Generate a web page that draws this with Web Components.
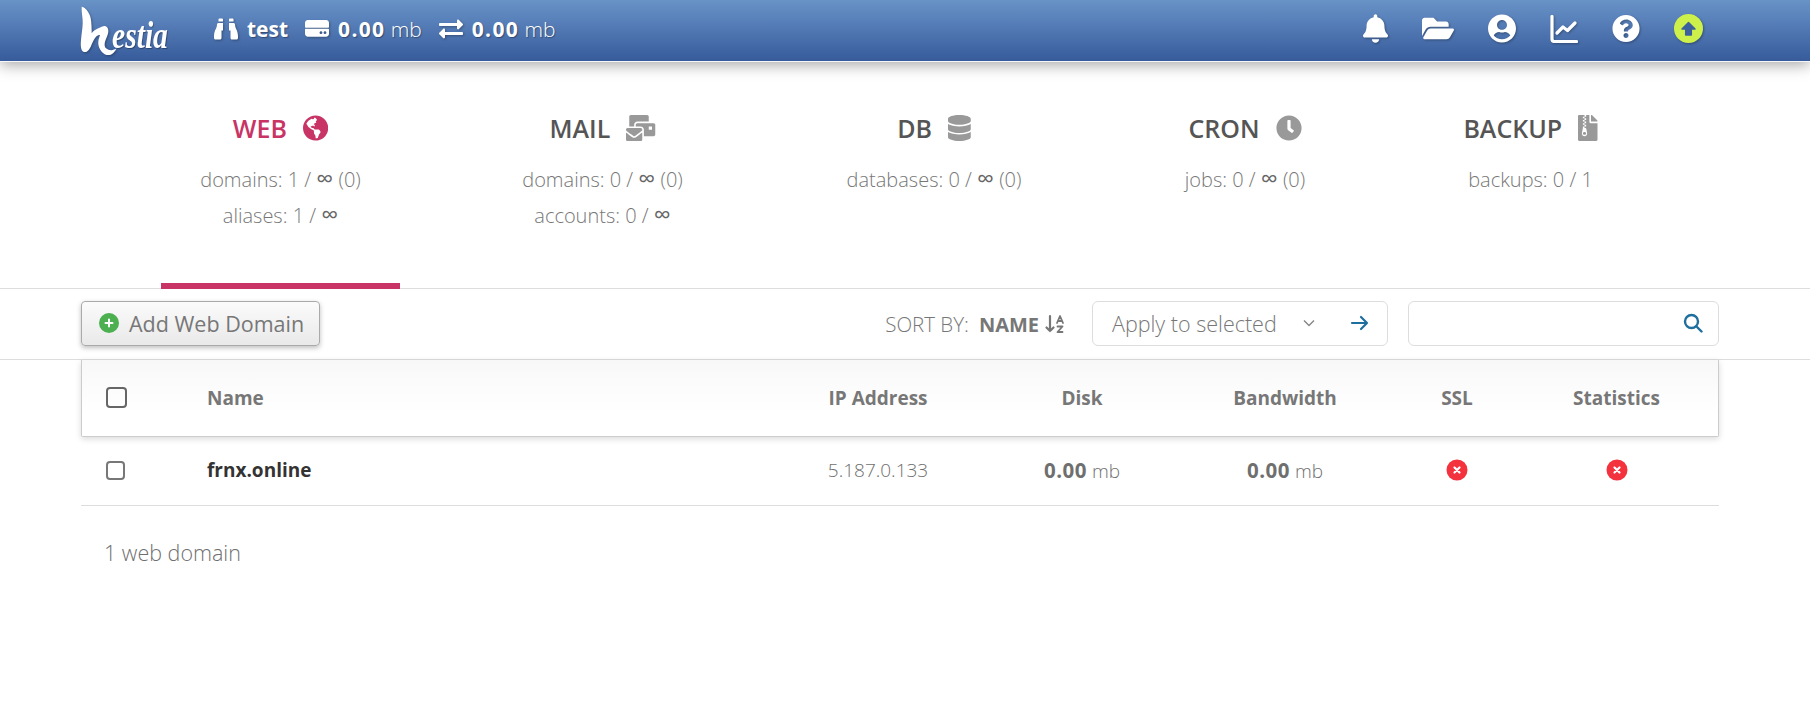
<!DOCTYPE html>
<html lang="en">
<head>
<meta charset="utf-8">
<title>Hestia</title>
<style>
html,body{margin:0;padding:0;background:#fff;}
body{font-family:"Open Sans","Noto Sans",sans-serif;color:#777;width:1810px;height:714px;overflow:hidden;}
hst-tab b{font-size:1.2em;line-height:0;color:#666;}
</style>
</head>
<body>
<hst-header></hst-header>
<hst-tabs>
  <hst-tab label="WEB" icon="globe" active>
    <div>domains: 1 / <b>∞</b> (0)</div>
    <div>aliases: 1 / <b>∞</b></div>
  </hst-tab>
  <hst-tab label="MAIL" icon="mail">
    <div>domains: 0 / <b>∞</b> (0)</div>
    <div>accounts: 0 / <b>∞</b></div>
  </hst-tab>
  <hst-tab label="DB" icon="database">
    <div>databases: 0 / <b>∞</b> (0)</div>
  </hst-tab>
  <hst-tab label="CRON" icon="clock">
    <div>jobs: 0 / <b>∞</b> (0)</div>
  </hst-tab>
  <hst-tab label="BACKUP" icon="archive">
    <div>backups: 0 / 1</div>
  </hst-tab>
</hst-tabs>
<hst-toolbar></hst-toolbar>
<hst-table></hst-table>
<script>
const P={
bell:['0 0 448 512','M224 512c35.32 0 63.97-28.65 63.97-64H160.03c0 35.35 28.65 64 63.97 64zm215.39-149.71c-19.32-20.76-55.47-51.99-55.47-154.29 0-77.7-54.48-139.9-127.94-155.16V32c0-17.67-14.32-32-31.98-32s-31.98 14.33-31.98 32v20.84C118.56 68.1 64.08 130.3 64.08 208c0 102.3-36.15 133.53-55.47 154.29-6 6.45-8.66 14.16-8.61 21.71.11 16.4 12.98 32 32.1 32h383.8c19.12 0 32-15.6 32.1-32 .05-7.55-2.61-15.27-8.61-21.71z'],
folder:['0 0 576 512','M572.694 292.093L500.27 416.248A63.997 63.997 0 0 1 444.989 448H45.025c-18.523 0-30.064-20.093-20.731-36.093l72.424-124.155A64 64 0 0 1 152 256h399.964c18.523 0 30.064 20.093 20.73 36.093zM152 224h328v-48c0-26.51-21.49-48-48-48H272l-64-64H48C21.49 64 0 85.49 0 112v278.046l69.077-118.418C86.214 242.25 117.989 224 152 224z'],
user:['0 0 496 512','M248 8C111 8 0 119 0 256s111 248 248 248 248-111 248-248S385 8 248 8zm0 96c48.6 0 88 39.4 88 88s-39.4 88-88 88-88-39.4-88-88 39.4-88 88-88zm0 344c-58.7 0-111.3-26.6-146.5-68.2 18.8-35.4 55.6-59.8 98.5-59.8 2.4 0 4.8.4 7.1 1.1 13 4.2 26.6 6.9 40.9 6.9 14.3 0 28-2.7 40.9-6.9 2.3-.7 4.7-1.1 7.1-1.1 42.9 0 79.7 24.4 98.5 59.8C359.3 421.4 306.7 448 248 448z'],
question:['0 0 512 512','M504 256c0 136.997-111.043 248-248 248S8 392.997 8 256C8 119.083 119.043 8 256 8s248 111.083 248 248zM262.655 90c-54.497 0-89.255 22.957-116.549 63.758-3.536 5.286-2.353 12.415 2.715 16.258l34.699 26.31c5.205 3.947 12.621 3.008 16.665-2.122 17.864-22.658 30.113-35.797 57.303-35.797 20.429 0 45.698 13.148 45.698 32.958 0 14.976-12.363 22.667-32.534 33.976C247.128 238.528 216 254.941 216 296v4c0 6.627 5.373 12 12 12h56c6.627 0 12-5.373 12-12v-1.333c0-28.462 83.186-29.647 83.186-106.667 0-58.002-60.165-102-116.531-102zM256 338c-25.365 0-46 20.635-46 46 0 25.364 20.635 46 46 46s46-20.636 46-46c0-25.365-20.635-46-46-46z'],
globe:['0 0 496 512','M248 8C111.03 8 0 119.03 0 256s111.03 248 248 248 248-111.03 248-248S384.97 8 248 8zm82.29 357.6c-3.9 3.88-7.99 7.95-11.31 11.28-2.99 3-5.1 6.7-6.17 10.71-1.51 5.66-2.73 11.38-4.77 16.87l-17.39 46.85c-13.76 3-28 4.69-42.65 4.69v-27.38c1.69-12.62-7.64-36.26-22.63-51.25-6-6-9.37-14.14-9.37-22.63v-32.01c0-11.64-6.27-22.34-16.46-27.97-14.37-7.95-34.81-19.06-48.81-26.11-11.48-5.78-22.1-13.14-31.65-21.75l-.8-.72a114.792 114.792 0 0 1-18.06-20.74c-9.38-13.77-24.66-36.42-34.59-51.14 20.47-45.5 57.36-82.04 103.2-101.89l24.01 12.01C203.48 89.74 216 82.01 216 70.11v-11.3c7.99-1.29 16.12-2.11 24.45-2.44l28.3 28.3c6.25 6.25 6.25 16.38 0 22.63L264 112l-10.34 10.34c-3.12 3.12-3.12 8.19 0 11.31l4.69 4.69c3.12 3.12 3.12 8.19 0 11.31l-8 8a8.008 8.008 0 0 1-5.66 2.34h-8.99c-2.08 0-4.08.81-5.58 2.27l-9.92 9.65a8.008 8.008 0 0 0-1.58 9.31l15.59 31.19c2.66 5.32-1.21 11.58-7.15 11.58h-5.64c-1.93 0-3.79-.7-5.24-1.96l-9.28-8.06a16.017 16.017 0 0 0-15.55-3.1l-31.17 10.39a11.95 11.95 0 0 0-8.17 11.34c0 4.53 2.56 8.66 6.61 10.69l11.08 5.54c9.41 4.71 19.79 7.16 30.31 7.16s22.59 27.29 32 32h66.75c8.49 0 16.62 3.37 22.63 9.37l13.69 13.69a30.503 30.503 0 0 1 8.93 21.57 46.536 46.536 0 0 1-13.72 32.98z'],
mail:['0 0 576 512','M160 448c-25.6 0-51.2-22.4-64-32-64-44.8-83.2-60.8-96-70.4V480c0 17.67 14.33 32 32 32h256c17.67 0 32-14.33 32-32V345.6c-12.8 9.6-32 25.6-96 70.4-12.8 9.6-38.4 32-64 32zm128-192H32c-17.67 0-32 14.33-32 32v16c25.6 19.2 22.4 19.2 115.2 86.4 9.6 6.4 28.8 25.6 44.8 25.6s35.2-19.2 44.8-22.4c92.8-67.2 89.6-67.2 115.2-86.4V288c0-17.67-14.33-32-32-32zm256-96H224c-17.67 0-32 14.33-32 32v32h96c33.21 0 60.59 25.42 63.71 57.82l.29-.22V416h192c17.67 0 32-14.33 32-32V192c0-17.67-14.33-32-32-32zm-32 128h-64v-64h64v64zm-352-96c0-35.29 28.71-64 64-64h224V32c0-17.67-14.33-32-32-32H96C78.33 0 64 14.33 64 32v192h96v-32z'],
database:['0 0 448 512','M448 73.143v45.714C448 159.143 347.667 192 224 192S0 159.143 0 118.857V73.143C0 32.857 100.333 0 224 0s224 32.857 224 73.143zM448 176v102.857C448 319.143 347.667 352 224 352S0 319.143 0 278.857V176c48.125 33.143 136.208 48.572 224 48.572S399.874 209.143 448 176zm0 160v102.857C448 479.143 347.667 512 224 512S0 479.143 0 438.857V336c48.125 33.143 136.208 48.572 224 48.572S399.874 369.143 448 336z'],
clock:['0 0 512 512','M256,8C119,8,8,119,8,256S119,504,256,504,504,393,504,256,393,8,256,8Zm92.49,313h0l-20,25a16,16,0,0,1-22.49,2.5h0l-67-49.72a40,40,0,0,1-15-31.23V112a16,16,0,0,1,16-16h32a16,16,0,0,1,16,16V256l58,42.5A16,16,0,0,1,348.49,321Z'],
archive:['0 0 384 512','M377 105L279.1 7c-4.5-4.5-10.6-7-17-7H256v128h128v-6.1c0-6.3-2.5-12.4-7-16.9zM128.4 336c-17.9 0-32.4 12.1-32.4 27 0 15 14.6 27 32.5 27s32.4-12.1 32.4-27-14.6-27-32.5-27zM224 136V0h-63.6v32h-32V0H24C10.7 0 0 10.7 0 24v464c0 13.3 10.7 24 24 24h336c13.3 0 24-10.7 24-24V160H248c-13.2 0-24-10.8-24-24zM95.9 32h32v32h-32zm32.3 384c-33.2 0-58-30.4-51.4-62.9L96.4 256v-32h32v-32h-32v-32h32v-32h-32V96h32V64h32v32h-32v32h32v32h-32v32h32v32h-32v32h22.1c5.7 0 10.7 4.1 11.8 9.7l17.3 87.7c6.4 32.4-18.4 62.6-51.4 62.6z'],
binoculars:['0 0 512 512','M416 48c0-8.84-7.16-16-16-16h-64c-8.84 0-16 7.16-16 16v48h96V48zM63.91 159.99C61.4 253.84 3.46 274.22 0 404v44c0 17.67 14.33 32 32 32h96c17.67 0 32-14.33 32-32V288h32V128H95.84c-17.63 0-31.45 14.37-31.93 31.99zm384.18 0c-.48-17.62-14.3-31.99-31.93-31.99H320v160h32v160c0 17.67 14.33 32 32 32h96c17.67 0 32-14.33 32-32v-44c-3.46-129.78-61.4-150.16-63.91-244.01zM176 32h-64c-8.84 0-16 7.16-16 16v48h96V48c0-8.84-7.16-16-16-16z'],
hdd:['0 0 576 512','M70 40h436c39 0 70 31 70 70v100c0 10-8 18-18 18H18c-10 0-18-8-18-18V110c0-39 31-70 70-70zM18 252h540c10 0 18 8 18 18v100c0 39-31 70-70 70H70c-39 0-70-31-70-70V270c0-10 8-18 18-18zm462 58c-19 0-34 15-34 34s15 34 34 34 34-15 34-34-15-34-34-34zm-96 0c-19 0-34 15-34 34s15 34 34 34 34-15 34-34-15-34-34-34z'],
exchange:['0 0 512 512','M0 168v-16c0-13.255 10.745-24 24-24h360V80c0-21.367 25.899-32.042 40.971-16.971l80 80c9.372 9.373 9.372 24.569 0 33.941l-80 80C409.956 271.982 384 261.456 384 240v-48H24c-13.255 0-24-10.745-24-24zm488 152H128v-48c0-21.314-25.862-32.08-40.971-16.971l-80 80c-9.372 9.373-9.372 24.569 0 33.941l80 80C102.057 463.997 128 453.437 128 432v-48h360c13.255 0 24-10.745 24-24v-16c0-13.255-10.745-24-24-24z']
};
const svg=(n,style='')=>`<svg viewBox="${P[n][0]}" style="${style}" fill="currentColor" fill-rule="evenodd" aria-hidden="true"><path d="${P[n][1]}"/></svg>`;

customElements.define('hst-header',class extends HTMLElement{
  constructor(){super();this.attachShadow({mode:'open'}).innerHTML=`<style>
  :host{display:block;height:62px;box-sizing:border-box;border-bottom:1px solid #f4f6f9;background:linear-gradient(180deg,#6893c6 0%,#5a82bb 30%,#375b9b 100%);box-shadow:0 3px 14px rgba(0,0,0,.35);position:relative;color:#fff;}
  .bar{display:flex;align-items:center;height:57px;padding:0 0 0 80px;text-shadow:1px 1px 1px rgba(0,0,0,.35);}
  svg{filter:drop-shadow(1px 1px 1px rgba(0,0,0,.3));display:block;flex:none;}
  .logo{width:90px;height:52px;margin-right:44px;display:flex;align-self:flex-start;margin-top:4px;position:relative;}
  .logo svg{width:42px;height:52px;}
  .logo span{position:absolute;left:32px;top:14px;font:italic 700 37px/36px "Liberation Serif",serif;transform:scaleX(.8);transform-origin:left center;}
  .stats{display:flex;align-items:center;font-size:21px;gap:17px;}
  .st{display:flex;align-items:center;gap:9px;font-weight:300;}
  .st b{font-weight:700;}
  .st .n{letter-spacing:1.300px;}
  .nav{margin-left:auto;display:flex;align-items:center;gap:34px;margin-right:107px;}
  </style>
  <div class="bar">
    <div class="logo"><svg viewBox="0 0 42 52" fill="#fff"><path d="M1.700 2.700C4 3 5.500 4.500 6.700 6 9 9 10.200 11.500 10.700 14.300 11.500 19 11.700 24 11.700 29.300 13.500 26.500 15.500 25.500 18.300 24.300 21 23 23 21.800 25 22 27.500 22.500 28.500 25 28.300 27.700 28 31 26 34.500 25 37.700 24.300 40.500 24.500 43 26 44.300 28 46 30.500 46.500 32.700 46 34.500 45.600 35.800 45 36.700 44.300 35 47.500 33 50 30 51 26.500 51.500 23.500 50 21.700 47.700 19 44.500 18 41 18.300 37.700 18.500 35 19.500 33 20 31 18.500 31 17 31.500 16 32.700 13.500 35.500 12.300 39 10.700 42.700 9.500 45 8.500 46.500 6.700 47.700 4.500 48.500 2.500 47.800 1.700 46 .5 43 .7 39.500 1 36 1.500 30 2.500 25 2.700 19.300 2.900 13.500 1.200 8 1.700 2.700Z"/></svg><span>estia</span></div>
    <div class="stats">
      <div class="st">${svg('binoculars','width:24px;height:24px')}<b>test</b></div>
      <div class="st">${svg('hdd','width:24px;height:24px')}<span><b class="n">0.00</b> mb</span></div>
      <div class="st">${svg('exchange','width:24px;height:24px')}<span><b class="n">0.00</b> mb</span></div>
    </div>
    <div class="nav">
      ${svg('bell','width:25px;height:29px')}
      ${svg('folder','width:32px;height:29px')}
      ${svg('user','width:28px;height:29px')}
      <svg viewBox="0 0 28 28" style="width:28px;height:28px" fill="none" stroke="currentColor" stroke-width="3.200" stroke-linecap="round" stroke-linejoin="round"><path d="M2 1.500V24c0 1.500 1 2.500 2.500 2.500h22"/><path d="M7 18l6-6 4.500 3.500L25 8"/></svg>
      ${svg('question','width:28px;height:29px')}
      <svg viewBox="0 0 29 29" style="width:29px;height:29px"><circle cx="14.500" cy="14.500" r="14.500" fill="#cdf04a"/><path d="M14.500 8.500 21 15H17.300V21H11.700V15H8Z" fill="#3c5f9d" stroke="#3c5f9d" stroke-width="1.500" stroke-linejoin="round"/></svg>
    </div>
  </div>`;
  }
});
customElements.define('hst-tabs',class extends HTMLElement{
  constructor(){super();this.attachShadow({mode:'open'}).innerHTML=`<style>
  :host{display:grid;grid-template-columns:239px 245px 258px 204px 200px;column-gap:80px;justify-content:start;height:227px;box-sizing:border-box;padding-left:161px;border-bottom:1px solid #ddd;}
  ::slotted(hst-tab:last-child){margin-left:7px;}
  </style><slot></slot>`;
  }
});
customElements.define('hst-tab',class extends HTMLElement{
  connectedCallback(){
    if(this.shadowRoot)return;
    const a=this.hasAttribute('active');
    this.attachShadow({mode:'open'}).innerHTML=`<style>
    :host{display:flex;flex-direction:column;align-items:center;height:227px;box-sizing:border-box;padding-top:52px;margin-bottom:-1px;font-size:20px;color:#777;font-weight:300;${a?'border-bottom:6px solid #c83465;':''}}
    .t{display:flex;align-items:center;gap:16px;height:27px;font-size:25px;font-weight:600;color:${a?'#c83465':'#555'};margin-bottom:26px;}
    .t svg{height:26px;width:auto;display:block;color:${a?'#c83465':'#999'};}
    .c{display:flex;flex-direction:column;gap:10px;text-align:center;}
    ::slotted(div){line-height:26px;}
    </style><div class="t"><span>${this.getAttribute('label')}</span>${svg(this.getAttribute('icon'))}</div><div class="c"><slot></slot></div>`;
  }
});
customElements.define('hst-toolbar',class extends HTMLElement{
  constructor(){super();this.attachShadow({mode:'open'}).innerHTML=`<style>
  :host{display:flex;align-items:center;height:71px;box-sizing:border-box;padding:0 91px 0 81px;border-bottom:1px solid #ddd;font-size:21.500px;}
  .add{display:flex;align-items:center;gap:10px;height:45px;width:239px;box-sizing:border-box;padding-left:17px;border:1px solid #aaa;border-radius:4px;background:linear-gradient(180deg,#fbfbfb,#e9e9e9);box-shadow:0 2px 5px rgba(0,0,0,.25);color:#777;font-weight:400;margin-top:-2px;}
  .plus{width:20px;height:20px;border-radius:50%;background:#4caf50;color:#fff;display:block;flex:none;}
  .sort{margin-left:auto;display:flex;align-items:center;font-weight:300;font-size:20.500px;color:#777;}
  .sort b{font-weight:700;font-size:20px;margin-left:10px;margin-right:5px;}
  .sel,.search{height:45px;box-sizing:border-box;border:1px solid #ddd;border-radius:6px;display:flex;align-items:center;margin-top:-2px;}
  .sel{width:296px;margin-left:26px;padding:0 17px 0 19px;font-weight:300;}
  .sel .ch{margin-left:auto;margin-right:34px;}
  .search{width:311px;margin-left:20px;justify-content:flex-end;padding-right:15px;}
  svg{display:block;}
  </style>
  <div class="add"><svg class="plus" viewBox="0 0 20 20" fill="none" stroke="#fff" stroke-width="2" stroke-linecap="round"><path d="M10 6.500v7M6.500 10h7"/></svg><span>Add Web Domain</span></div>
  <div class="sort"><span>SORT BY:</span><b>NAME</b>
    <svg viewBox="0 0 22 22" width="22" height="22" fill="none" stroke="#777" stroke-width="2.200" stroke-linecap="round" stroke-linejoin="round"><path d="M6 3v15M2.500 14.500 6 18l3.500-3.500"/><path d="M13 10l3-7 3 7M14 8h4" stroke-width="1.800"/><path d="M13.500 13.500h5L13.500 19h5" stroke-width="1.800"/></svg>
  </div>
  <div class="sel"><span>Apply to selected</span>
    <svg class="ch" viewBox="0 0 14 14" width="14" height="14" fill="none" stroke="#888" stroke-width="1.500"><path d="M2 4.500l5 5 5-5"/></svg>
    <svg viewBox="0 0 20 20" width="20" height="20" fill="none" stroke="#1f6f9e" stroke-width="2.200" stroke-linecap="round" stroke-linejoin="round"><path d="M2 10h15M11 4l6 6-6 6"/></svg>
  </div>
  <div class="search"><svg viewBox="0 0 20 20" width="20" height="20" fill="none" stroke="#1f6f9e" stroke-width="2.400" stroke-linecap="round"><circle cx="8.500" cy="8.500" r="6.500"/><path d="M13.500 13.500 18.500 18.500"/></svg></div>`;
  }
});
customElements.define('hst-table',class extends HTMLElement{
  constructor(){super();
  const x=`<svg class="x" viewBox="0 0 22 22" width="22" height="22"><circle cx="11" cy="11" r="10.500" fill="#f4323e"/><path d="M8.500 8.500l5 5M13.500 8.500l-5 5" stroke="#fff" stroke-width="2.200" stroke-linecap="round"/></svg>`;
  this.attachShadow({mode:'open'}).innerHTML=`<style>
  :host{display:block;padding:0 91px 0 81px;font-size:19px;}
  .row{display:grid;grid-template-columns:126px 556px 230px 178px 228px 116px 204px;align-items:center;text-align:center;}
  .row>:nth-child(2){text-align:left;}
  .head{height:77px;box-sizing:border-box;border:1px solid #ccc;border-top:none;border-radius:0 0 2px 2px;background:linear-gradient(180deg,#f8f8f8,#fff 70%);box-shadow:0 2px 6px rgba(0,0,0,.15);font-weight:700;color:#777;padding-bottom:1px;grid-template-columns:125px 556px 230px 178px 228px 116px 203px;}
  .body{height:69px;box-sizing:border-box;border-bottom:1px solid #ddd;color:#6f6f6f;font-weight:300;padding-bottom:2px;}
  .body b{font-weight:700;font-size:20.500px;letter-spacing:.5px;}
  .body .name{font-weight:700;color:#333;}
  .cb{display:block;box-sizing:border-box;border:2px solid #666;border-radius:4px;width:21px;height:21px;margin-left:24px;}
  .body .cb{width:19px;height:19px;border-color:#777;margin-left:25px;}
  .x{display:block;margin:auto;}
  .foot{margin:32px 0 0 23px;font-size:21.500px;line-height:30px;font-weight:300;color:#6f6f6f;}
  </style>
  <div class="row head"><span class="cb"></span><span>Name</span><span>IP Address</span><span>Disk</span><span>Bandwidth</span><span>SSL</span><span>Statistics</span></div>
  <div class="row body"><span class="cb"></span><span class="name">frnx.online</span><span>5.187.0.133</span><span><b>0.00</b> mb</span><span><b>0.00</b> mb</span><span>${x}</span><span>${x}</span></div>
  <div class="foot">1 web domain</div>`;
  }
});
</script>
</body>
</html>
